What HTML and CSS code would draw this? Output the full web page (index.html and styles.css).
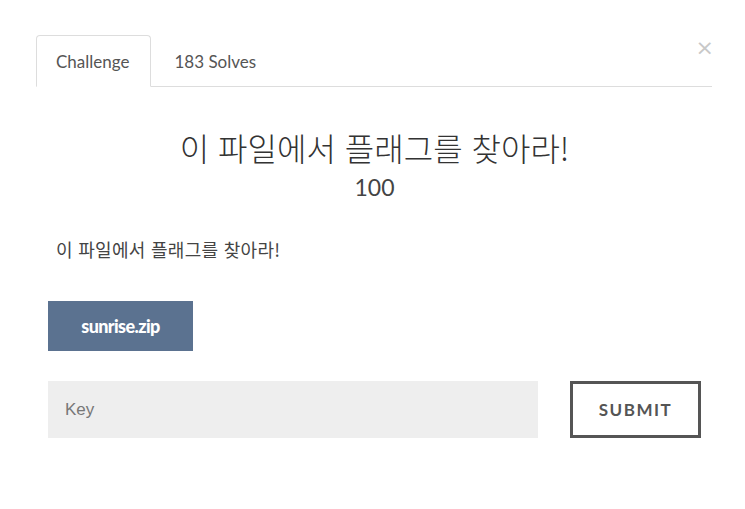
FILE: index.html
```html
<!DOCTYPE html>
<html lang="ko">
<head>
<meta charset="utf-8">
<link rel="stylesheet" href="styles.css">
</head>
<body>
<div class="modal">
  <div class="tabs">
    <div class="tab active">Challenge</div>
    <div class="tab">183 Solves</div>
    <div class="close">&times;</div>
  </div>
  <div class="content">
    <h3 class="title">이 파일에서 플래그를 찾아라!</h3>
    <div class="value">100</div>
    <p class="desc">이 파일에서 플래그를 찾아라!</p>
    <div class="files"><a class="file">sunrise.zip</a></div>
    <div class="form">
      <input class="key" type="text" placeholder="Key">
      <button class="submit">SUBMIT</button>
    </div>
  </div>
</div>
</body>
</html>
```
FILE: styles.css
```css
html, body {
  margin: 0;
  padding: 0;
  background: #fff;
  font-family: Lato, "Noto Sans CJK KR", sans-serif;
  color: #333;
}
.modal {
  padding: 35px 33px 0 36px;
}
.tabs {
  display: flex;
  align-items: stretch;
  height: 51px;
  border-bottom: 1px solid #ddd;
  position: relative;
}
.tab {
  display: flex;
  align-items: center;
  padding: 0 20px 0 19px;
  font-size: 17px;
  color: #555;
  border: 1px solid transparent;
  border-radius: 4px 4px 0 0;
  margin-bottom: -1px;
}
.tab.active {
  border-color: #ddd;
  border-bottom-color: #fff;
  padding-right: 21px;
}
.tab + .tab {
  padding-left: 22px;
}
.close {
  position: absolute;
  right: -2px;
  top: 1px;
  font-size: 22px;
  color: #c8c8c8;
  font-family: "DejaVu Sans", sans-serif;
  line-height: 24px;
}
.content {
  padding: 0 11px 0 12px;
}
.title {
  margin: 37px 0 0;
  text-align: center;
  font-family: "Noto Sans CJK KR", sans-serif;
  font-weight: 300;
  font-size: 32px;
  line-height: 46px;
  color: #333;
}
.value {
  text-align: center;
  font-size: 23px;
  line-height: 32px;
  margin-top: 1px;
  color: #444;
}
.desc {
  margin: 33px 0 0 8px;
  font-family: "Noto Sans CJK KR", sans-serif;
  font-size: 18px;
  line-height: 26px;
  letter-spacing: 0.3px;
  color: #444;
}
.files {
  margin-top: 39px;
  display: flex;
}
.file {
  display: flex;
  align-items: center;
  justify-content: center;
  width: 145px;
  height: 50px;
  background: #5b7290;
  color: #fff;
  font-weight: 900;
  font-size: 18px;
  letter-spacing: -0.6px;
}
.form {
  margin-top: 30px;
  display: flex;
  justify-content: space-between;
}
.key {
  width: 490px;
  height: 57px;
  box-sizing: border-box;
  border: none;
  background: #eee;
  padding: 0 17px;
  font-family: "Liberation Sans", Arial, sans-serif;
  font-size: 17px;
  outline: none;
}
.key::placeholder {
  color: #777;
}
.submit {
  width: 131px;
  height: 57px;
  box-sizing: border-box;
  border: 3px solid #555;
  background: #fff;
  color: #555;
  font-family: Lato, sans-serif;
  font-weight: bold;
  font-size: 17px;
  letter-spacing: 1.5px;
  padding: 0;
}
```
